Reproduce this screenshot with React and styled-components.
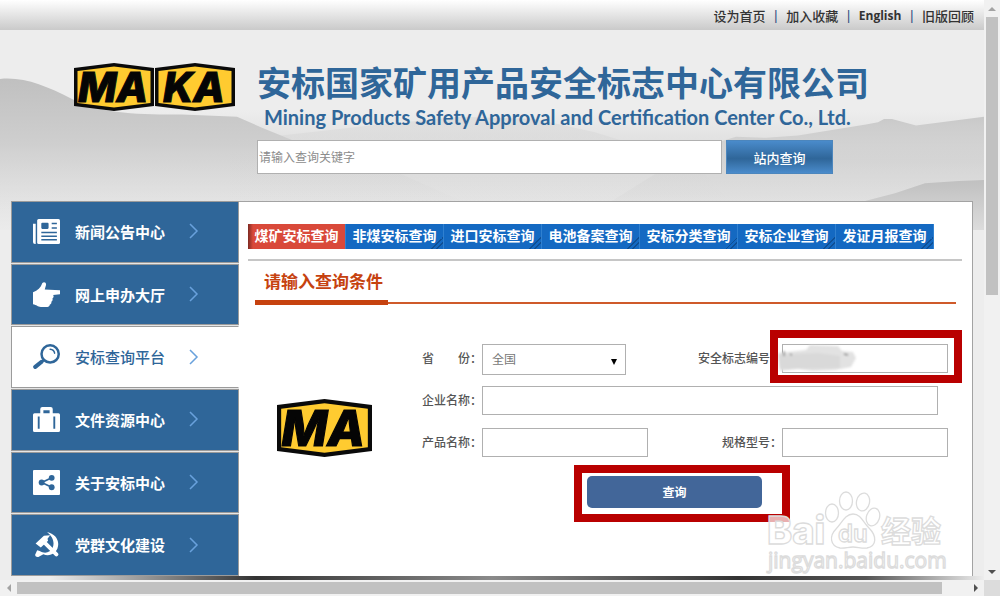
import React from "react";
import styled, { createGlobalStyle } from "styled-components";

const menu = [
  { name: "新闻公告中心", icon: "news" },
  { name: "网上申办大厅", icon: "hand" },
  { name: "安标查询平台", icon: "search", active: true },
  { name: "文件资源中心", icon: "case" },
  { name: "关于安标中心", icon: "share" },
  { name: "党群文化建设", icon: "party" },
];

const tabs = [
  "煤矿安标查询",
  "非煤安标查询",
  "进口安标查询",
  "电池备案查询",
  "安标分类查询",
  "安标企业查询",
  "发证月报查询",
];

const icons = {
  news: (
    <>
      <path d="M0 4.5h2.6V24H2a2 2 0 0 1-2-2z" fill="currentColor" />
      <rect x="4" width="22" height="24" rx="1.5" fill="currentColor" />
      <rect x="8" y="3.5" width="7" height="6" rx="1" fill="#2f6699" />
      <path
        d="M18 4.3h5M18 8.6h5M8 13h15M8 16.5h15M8 20h15"
        stroke="#2f6699"
        strokeWidth="1.4"
      />
    </>
  ),
  hand: (
    <path
      d="M9 1c2-1.8 4.2 0 3.4 2.3L11.3 7.3l14.7.5v4l-6.6.7c.8 1.4.5 2.8-.7 3.3.5 1.4 0 2.7-1 3.2.2 1.5-.4 2.6-1.6 2.9-.1 1.3-1 2.1-2.2 2.1H7.5C4.5 24 3.5 22 0 21.5V9.8C4.5 8.5 7.5 5.5 9 1z"
      fill="currentColor"
    />
  ),
  search: (
    <g fill="none" stroke="currentColor" strokeLinecap="round">
      <circle cx="16.5" cy="9.5" r="8.3" strokeWidth="2.4" />
      <path d="M16.5 5c2.5.2 4 1.6 4.3 3.8" strokeWidth="1.4" />
      <path d="M10.3 15.5L8.8 17" strokeWidth="2.4" />
      <path d="M8 17.3L2.2 22" strokeWidth="4" />
    </g>
  ),
  case: (
    <>
      <path
        d="M7 6V2a2 2 0 0 1 2-2h8a2 2 0 0 1 2 2v4h5.5A1.5 1.5 0 0 1 26 7.5v15a1.5 1.5 0 0 1-1.5 1.5h-23A1.5 1.5 0 0 1 0 22.5v-15A1.5 1.5 0 0 1 1.5 6zM10 3.2V6h6V3.2z"
        fill="currentColor"
        fillRule="evenodd"
      />
      <path d="M5.5 9v12M20.5 9v12" stroke="#2f6699" strokeWidth="1.8" />
    </>
  ),
  share: (
    <>
      <rect width="26" height="24" rx="1" fill="currentColor" />
      <path
        d="M18 7.5L8.5 12l9.5 4.5"
        fill="none"
        stroke="#2f6699"
        strokeWidth="1.7"
      />
      <circle cx="8.3" cy="12" r="2.8" fill="#2f6699" />
      <circle cx="18" cy="7.5" r="2.8" fill="#2f6699" />
      <circle cx="18" cy="16.6" r="2.8" fill="#2f6699" />
    </>
  ),
  party: (
    <>
      <path
        d="M13.5 0C21 1.5 25.5 7.5 24 14c-1 6.5-8 10-14 7.5l-4 2C4 25 1 23 2.5 21L4 17.5l2.500.8c4.500 3 10.500 1.700 12.500-3.300C21.200 9.500 18.500 4 13.500 0z"
        fill="currentColor"
      />
      <path d="M9.5 8.5L22.5 21.5" stroke="currentColor" strokeWidth="3.8" strokeLinecap="round" />
      <path d="M2.5 11L10.5 3.5l6-.5-2.5 3.5.5 2L7.5 15z" fill="currentColor" />
    </>
  ),
};

function Badge({ text, width, height }) {
  return (
    <svg width={width} height={height} viewBox="0 0 80 48" preserveAspectRatio="none" role="img" aria-label={text}>
      <path d="M0 5L40 0l40 5v38l-40 5-40-5z" fill="#0a0a0a" />
      <path d="M3.5 8L40 3.5 76.5 8v32L40 44.5 3.5 40z" fill="#ffcb30" />
      <text
        x="39"
        y="39"
        textAnchor="middle"
        fontFamily="Inter, 'Liberation Sans', sans-serif"
        fontWeight="800"
        fontStyle="italic"
        fontSize="41"
        fill="#050505"
        stroke="#050505"
        strokeWidth="1"
      >
        {text}
      </text>
    </svg>
  );
}

function Mountains() {
  return (
    <Backdrop viewBox="0 0 984 180" preserveAspectRatio="none" aria-hidden="true">
      <defs>
        <linearGradient id="ridge" x1="0" y1="0" x2="0" y2="1">
          <stop offset="0" stopColor="#c0c0c0" />
          <stop offset="0.5" stopColor="#cfcfcf" />
          <stop offset="1" stopColor="#e2e2e2" stopOpacity="0" />
        </linearGradient>
        <linearGradient id="mist" x1="0" y1="0" x2="0" y2="1">
          <stop offset="0" stopColor="#c9c9c9" />
          <stop offset="1" stopColor="#dedede" stopOpacity="0" />
        </linearGradient>
        <linearGradient id="base" x1="0" y1="0" x2="0" y2="1">
          <stop offset="0.4" stopColor="#dadada" stopOpacity="0" />
          <stop offset="0.65" stopColor="#dadada" />
          <stop offset="1" stopColor="#ebebeb" />
        </linearGradient>
        <linearGradient id="slope" x1="0" y1="0" x2="0" y2="1">
          <stop offset="0" stopColor="#c0c0c0" />
          <stop offset="1" stopColor="#dcdcdc" />
        </linearGradient>
      </defs>
      <path d="M0 0h984v180H0z" fill="url(#base)" />
      <path d="M0 44C25 42 45 50 72 62c30 14 70 14 110 14l55 2 25 10 60 22 80 20 60 24v10H0z" fill="url(#ridge)" />
      <path d="M230 100l80-8 60-6 90-8 75 2 60 12 100 28 40 40H230z" fill="url(#mist)" opacity="0.35" />
      <path d="M690 110l12-7 20-3 14-4 30 1 32-2 40-6 28-4 12-2 6-3 8 0 24 6 35-4 33-4v105H560z" fill="url(#mist)" />
      <path d="M790 170l35-10 40-6 30-7 30-9 34-2 25-1v45H770z" fill="url(#slope)" />
    </Backdrop>
  );
}

function Watermark() {
  return (
    <Mark width="184" height="86" viewBox="0 0 184 86" aria-hidden="true">
      <g fill="#fff" fillOpacity="0.7" stroke="#dcdcdc" strokeWidth="1.3">
        <ellipse cx="67" cy="23" rx="6.5" ry="9" />
        <ellipse cx="81" cy="11" rx="6.5" ry="9" />
        <ellipse cx="98" cy="12" rx="6.5" ry="9" transform="rotate(12 98 12)" />
        <ellipse cx="108" cy="27" rx="6.5" ry="9" transform="rotate(18 108 27)" />
        <path d="M88 24c8 0 10 8 16 14 8 8 8 18-2 20-6 .5-9-1-14-1s-8 1.500-13 1c-10-2-11-12-4-19 6-6 9-15 17-15z" />
        <text x="2" y="54" fontFamily="Inter, sans-serif" fontSize="38" fontWeight="800">Bai</text>
        <text x="73" y="52" fontFamily="Inter, sans-serif" fontSize="24" fontWeight="600">du</text>
        <text x="116" y="52" fontFamily="'Noto Sans CJK SC', sans-serif" fontSize="30" fontWeight="700">经验</text>
        <text x="3" y="78" fontFamily="'Open Sans', sans-serif" fontSize="21" fontWeight="400">jingyan.baidu.com</text>
      </g>
    </Mark>
  );
}

export default function App() {
  return (
    <Shell>
      <GlobalStyle />
      <Page>
        <Mountains />
        <TopBar>
          <a href="#home">设为首页</a>
          <span>|</span>
          <a href="#fav">加入收藏</a>
          <span>|</span>
          <a href="#en">English</a>
          <span>|</span>
          <a href="#old">旧版回顾</a>
        </TopBar>
        <Header>
          <Logos>
            <Badge text="MA" width="80" height="48" />
            <Badge text="KA" width="80" height="48" />
          </Logos>
          <Brand>
            <h1>安标国家矿用产品安全标志中心有限公司</h1>
            <p>Mining Products Safety Approval and Certification Center Co., Ltd.</p>
            <Search>
              <input type="text" placeholder="请输入查询关键字" aria-label="请输入查询关键字" />
              <button type="button">站内查询</button>
            </Search>
          </Brand>
        </Header>
        <Panel>
          <Menu>
            {menu.map((item) => (
              <MenuItem href={"#" + item.icon} key={item.icon} $active={item.active}>
                <svg width="27" height="25" viewBox="0 0 26 24">
                  {icons[item.icon]}
                </svg>
                <span>{item.name}</span>
                <Chevron width="10" height="16" viewBox="0 0 10 16">
                  <path d="M1 1l7 7-7 7" fill="none" stroke="currentColor" strokeWidth="1.5" />
                </Chevron>
              </MenuItem>
            ))}
          </Menu>
          <Content>
            <Tabs>
              {tabs.map((tab, i) => (
                <Tab type="button" key={tab} $active={i === 0}>
                  {tab}
                </Tab>
              ))}
            </Tabs>
            <Heading>
              <h2>请输入查询条件</h2>
              <i />
            </Heading>
            <Body>
              <Badge text="MA" width="95" height="58" />
              <Form onSubmit={(e) => e.preventDefault()}>
                <label htmlFor="province">省　　份：</label>
                <SelectBox>
                  <select id="province">
                    <option>全国</option>
                  </select>
                  <svg width="6" height="6" viewBox="0 0 6 6">
                    <path d="M0 0h6L3 6z" />
                  </svg>
                </SelectBox>
                <label htmlFor="code">安全标志编号：</label>
                <Field>
                  <Input id="code" type="text" />
                  <Smudge width="80" height="28" viewBox="0 0 80 28" aria-hidden="true">
                    <path d="M0 9l28-3 4-5 28 1 4 5 11 1 3 6-5 9-16 3-22 1-15-2-18 2z" fill="#e2e2e2" />
                    <path d="M0 11l40-2 22 3v12l-60 1z" fill="#d6d6d6" opacity="0.7" />
                    <path d="M6 7v5M12 10l2 1M66 10l4 1" stroke="#666" />
                  </Smudge>
                  <Frame />
                </Field>
                <label htmlFor="company">企业名称：</label>
                <WideField>
                  <Input id="company" type="text" />
                </WideField>
                <label htmlFor="product">产品名称：</label>
                <Input id="product" type="text" />
                <label htmlFor="model">规格型号：</label>
                <Input id="model" type="text" />
                <SubmitBox>
                  <button type="submit">查询</button>
                  <SubmitFrame />
                </SubmitBox>
              </Form>
            </Body>
          </Content>
        </Panel>
        <Shade />
        <Watermark />
      </Page>
      <ScrollV>
        <button type="button" aria-label="up">
          <svg width="8" height="4" viewBox="0 0 8 4"><path d="M0 4h8L4 0z" fill="#a3a3a3" /></svg>
        </button>
        <div />
        <button type="button" aria-label="down">
          <svg width="8" height="4" viewBox="0 0 8 4"><path d="M0 0h8L4 4z" fill="#505050" /></svg>
        </button>
      </ScrollV>
      <ScrollH>
        <button type="button" aria-label="left">
          <svg width="4" height="8" viewBox="0 0 4 8"><path d="M4 0v8L0 4z" fill="#a3a3a3" /></svg>
        </button>
        <div />
        <button type="button" aria-label="right">
          <svg width="4" height="8" viewBox="0 0 4 8"><path d="M0 0v8l4-4z" fill="#505050" /></svg>
        </button>
      </ScrollH>
      <Corner />
    </Shell>
  );
}

const GlobalStyle = createGlobalStyle`
  * {
    box-sizing: border-box;
  }
  body {
    margin: 0;
    background: #ededed;
    font-family: "Open Sans", "Noto Sans CJK SC", sans-serif;
    font-size: 12px;
    color: #555;
  }
  h1, h2, p {
    margin: 0;
  }
  a {
    color: inherit;
    text-decoration: none;
  }
  input, select, button {
    font-family: inherit;
    margin: 0;
  }
`;

const Shell = styled.div`
  display: grid;
  grid-template-columns: minmax(0, 1fr) 16px;
  grid-template-rows: 1fr 16px;
  min-height: 100vh;
`;

const Page = styled.div`
  position: relative;
  display: flex;
  flex-direction: column;
  background: #ededed;
  overflow: hidden;
`;

const Backdrop = styled.svg`
  position: absolute;
  left: 0;
  top: 30px;
  width: 100%;
  height: 200px;
`;

const TopBar = styled.div`
  position: relative;
  display: flex;
  justify-content: flex-end;
  align-items: center;
  gap: 7px;
  height: 30px;
  padding-right: 10px;
  background: linear-gradient(#ffffff, #cacaca);
  color: #333;
  font-size: 12px;
  span {
    color: #2f4f7f;
    font-weight: 600;
  }
  a {
    font-size: 13px;
    font-weight: 500;
  }
  a[href="#en"] {
    font-weight: 700;
    font-size: 12px;
  }
`;

const Header = styled.header`
  position: relative;
  display: flex;
  gap: 22px;
  padding: 33px 0 27px 74px;
`;

const Logos = styled.div`
  display: flex;
  gap: 1px;
  height: 48px;
`;

const Brand = styled.div`
  flex: 1;
  color: #2f6699;
  h1 {
    font-size: 34px;
    line-height: 40px;
    font-weight: 700;
    white-space: nowrap;
  }
  p {
    font-family: Lato, sans-serif;
    font-size: 20px;
    line-height: 28px;
    font-weight: 700;
    white-space: nowrap;
    padding-left: 7px;
  }
`;

const Search = styled.div`
  display: flex;
  gap: 4px;
  margin-top: 9px;
  padding-right: 151px;
  input {
    flex: 1;
    height: 34px;
    border: 1px solid #b0b0b0;
    background: #fff;
    padding: 0 1px;
    font-size: 12px;
  }
  input::placeholder {
    color: #8c8c8c;
  }
  button {
    width: 107px;
    height: 34px;
    border: 1px solid #4c86bd;
    background: linear-gradient(#4a8bcb, #2f6699 55%, #4a8bcb);
    color: #fff;
    font-size: 13px;
    font-weight: 500;
  }
`;

const Panel = styled.div`
  position: relative;
  flex: 1;
  display: flex;
  margin: 0 11px 4px;
  border-right: 1px solid #a3a3a3;
  background: #fff;
`;

const Menu = styled.nav`
  display: flex;
  flex-direction: column;
  gap: 1px;
  width: 228px;
  background: #e6e6e6;
`;

const MenuItem = styled.a`
  flex: 1;
  display: flex;
  align-items: center;
  min-height: 60px;
  padding: 0 0 1px 21px;
  border: 1px solid #9b9b9b;
  border-right-color: ${(p) => (p.$active ? "#fff" : "#9b9b9b")};
  background: ${(p) => (p.$active ? "#fff" : "#2f6699")};
  color: ${(p) => (p.$active ? "#2f6699" : "#fff")};
  font-size: 15px;
  font-weight: ${(p) => (p.$active ? 500 : 700)};
  span {
    width: 92px;
    margin: 0 22px 0 15px;
    white-space: nowrap;
  }
`;

const Chevron = styled.svg`
  color: #69a1dc;
`;

const Content = styled.main`
  flex: 1;
  padding: 22px 10px 0 9px;
  border-top: 1px solid #a3a3a3;
`;

const Tabs = styled.div`
  display: flex;
  padding-bottom: 10px;
  border-bottom: 2px solid #c6c6c6;
`;

const Tab = styled.button`
  width: 98px;
  height: 25px;
  padding: 0 0 2px;
  border: 0;
  border-right: 1px solid #2f80d0;
  background: ${(p) =>
    p.$active
      ? "linear-gradient(90deg, #7d2a22, #d9493a 5px)"
      : "linear-gradient(135deg, transparent 50%, #0f4f94 50% 57%, transparent 57% 70%, #0f4f94 70% 77%, transparent 77%) right bottom / 12px 12px no-repeat #1469c2"};
  color: #fff;
  font-size: 14px;
  line-height: 20px;
  font-weight: 700;
  white-space: nowrap;
`;

const Heading = styled.div`
  display: flex;
  align-items: flex-end;
  margin: 0 6px 0 7px;
  h2 {
    width: 133px;
    padding: 3px 0 0 9px;
    border-bottom: 5px solid #c6420f;
    color: #c6420f;
    font-size: 17px;
    line-height: 36px;
    font-weight: 600;
    white-space: nowrap;
  }
  i {
    flex: 1;
    height: 2px;
    margin-bottom: 1px;
    background: #cf5a2a;
  }
`;

const Body = styled.div`
  display: flex;
  align-items: center;
  gap: 50px;
  padding: 39px 14px 0 29px;
`;

const Form = styled.form`
  flex: 1;
  display: grid;
  grid-template-columns: 60px 166px 1fr 166px;
  grid-auto-rows: 42px;
  align-items: start;
  label {
    font-size: 12px;
    line-height: 30px;
    font-weight: 500;
    text-align: right;
    white-space: nowrap;
  }
`;

const Input = styled.input`
  display: block;
  width: 100%;
  height: 29px;
  border: 1px solid #b0b0b0;
  background: #fff;
  padding: 0 8px;
  font-size: 12px;
`;

const Field = styled.div`
  position: relative;
`;

const WideField = styled.div`
  grid-column: 2 / 5;
  padding-right: 10px;
`;

const SelectBox = styled.div`
  position: relative;
  width: 144px;
  select {
    appearance: none;
    width: 100%;
    height: 31px;
    padding: 0 9px;
    border: 1px solid #b0b0b0;
    border-radius: 0;
    background: #fff;
    color: #777;
    font-size: 12px;
  }
  svg {
    position: absolute;
    right: 9px;
    top: 15px;
    pointer-events: none;
  }
`;

const Smudge = styled.svg`
  position: absolute;
  left: -4px;
  top: 0;
  filter: blur(1px);
`;

const Frame = styled.div`
  position: absolute;
  inset: -14px -14px -10px -12px;
  border: 8px solid #b90000;
  pointer-events: none;
`;

const SubmitBox = styled.div`
  position: relative;
  grid-column: 1 / 5;
  justify-self: start;
  margin: 6px 0 0 165px;
  button {
    display: block;
    width: 175px;
    height: 32px;
    border: 0;
    border-radius: 5px;
    background: #426699;
    color: #fff;
    font-size: 12px;
    font-weight: 700;
  }
`;

const SubmitFrame = styled(Frame)`
  inset: -11px -28px -14px -13px;
`;

const Shade = styled.div`
  position: absolute;
  left: 0;
  right: 0;
  bottom: 0;
  height: 4px;
  background: linear-gradient(90deg, transparent 5%, #333 26%, #8a8a8a 50%, #333 75%, #555 88%, transparent);
`;

const Mark = styled.svg`
  position: absolute;
  right: 35px;
  bottom: 4px;
  pointer-events: none;
`;

const ScrollV = styled.div`
  display: flex;
  flex-direction: column;
  background: #f1f1f1;
  button {
    display: flex;
    align-items: center;
    justify-content: center;
    height: 17px;
    padding: 0;
    border: 0;
    background: none;
  }
  div {
    width: 12px;
    height: 48%;
    margin: 0 2px auto;
    background: #c1c1c1;
  }
`;

const ScrollH = styled(ScrollV)`
  flex-direction: row;
  button {
    width: 17px;
    height: 16px;
  }
  div {
    width: 94%;
    height: 12px;
    margin: 2px auto 2px 0;
  }
`;

const Corner = styled.div`
  background: #dcdcdc;
`;
